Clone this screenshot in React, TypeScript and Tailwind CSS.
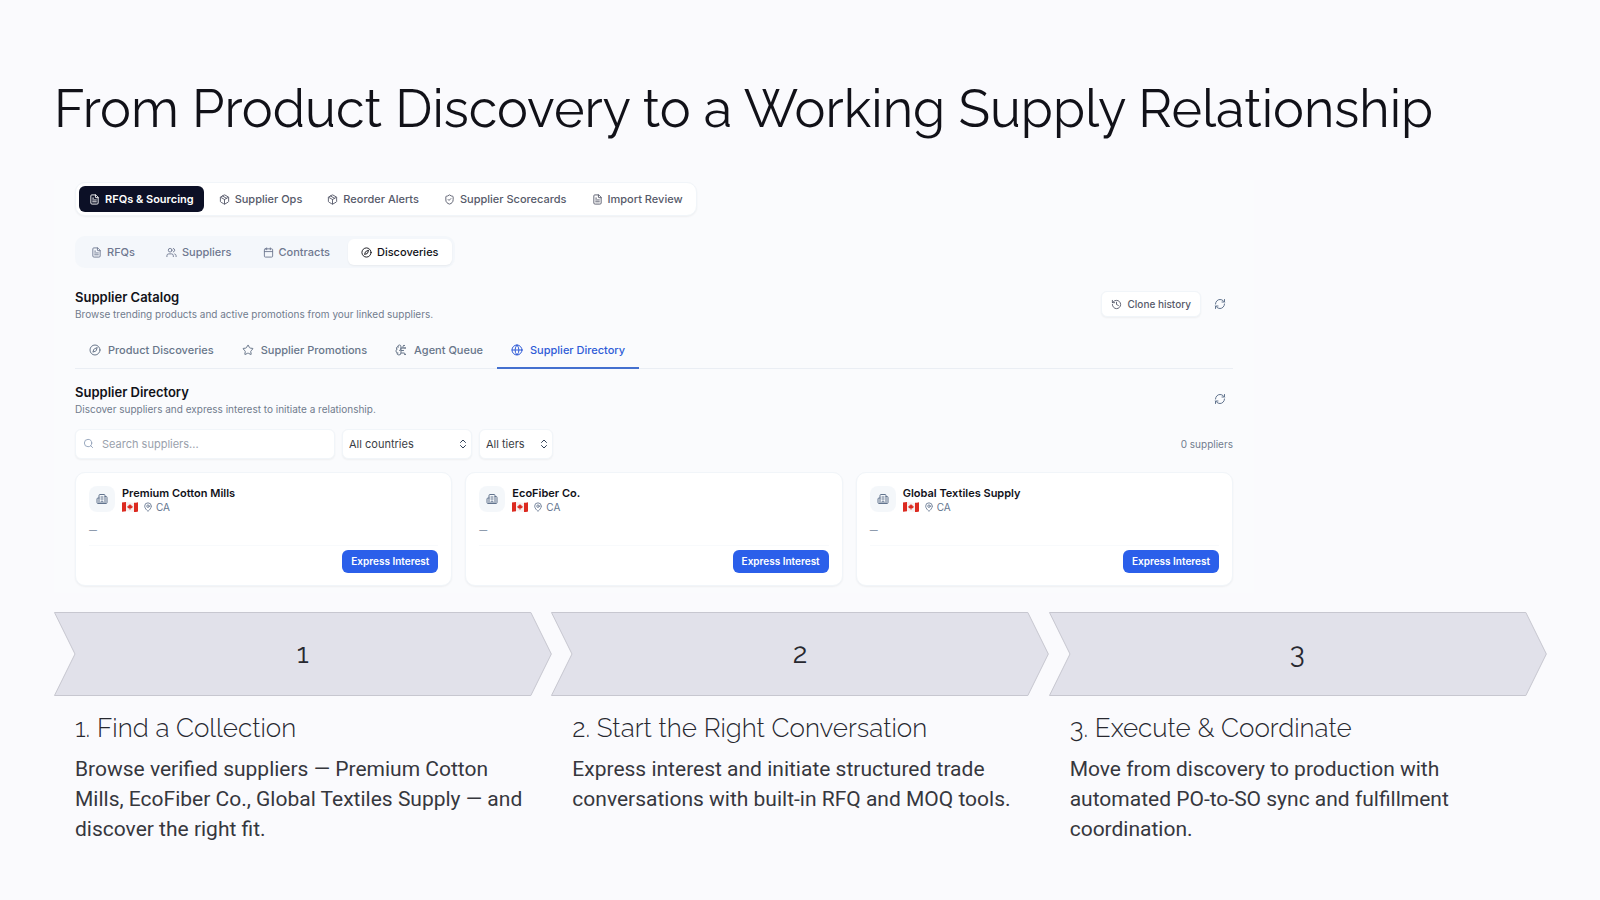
import React from 'react';
import {
  BrainCircuit,
  Building2,
  Calendar,
  ChevronsUpDown,
  Compass,
  FileText,
  Globe,
  History,
  LucideIcon,
  MapPin,
  Package,
  RefreshCw,
  Search,
  ShieldCheck,
  Star,
  Users,
} from 'lucide-react';

interface TabItem {
  label: string;
  icon: LucideIcon;
}

interface Step {
  title: string;
  text: string;
}

const mainTabs: TabItem[] = [
  { label: 'RFQs & Sourcing', icon: FileText },
  { label: 'Supplier Ops', icon: Package },
  { label: 'Reorder Alerts', icon: Package },
  { label: 'Supplier Scorecards', icon: ShieldCheck },
  { label: 'Import Review', icon: FileText },
];

const subTabs: TabItem[] = [
  { label: 'RFQs', icon: FileText },
  { label: 'Suppliers', icon: Users },
  { label: 'Contracts', icon: Calendar },
  { label: 'Discoveries', icon: Compass },
];

const catalogTabs: TabItem[] = [
  { label: 'Product Discoveries', icon: Compass },
  { label: 'Supplier Promotions', icon: Star },
  { label: 'Agent Queue', icon: BrainCircuit },
  { label: 'Supplier Directory', icon: Globe },
];

const suppliers = ['Premium Cotton Mills', 'EcoFiber Co.', 'Global Textiles Supply'];

const steps: Step[] = [
  {
    title: 'Find a Collection',
    text: 'Browse verified suppliers — Premium Cotton Mills, EcoFiber Co., Global Textiles Supply — and discover the right fit.',
  },
  {
    title: 'Start the Right Conversation',
    text: 'Express interest and initiate structured trade conversations with built-in RFQ and MOQ tools.',
  },
  {
    title: 'Execute & Coordinate',
    text: 'Move from discovery to production with automated PO-to-SO sync and fulfillment coordination.',
  },
];

const CanadaFlag: React.FC = () => (
  <svg viewBox="0 0 16 10" className="h-[10px] w-4" aria-hidden="true">
    <path d="M0 .6Q4 -.4 8 .5T16 .2V9.4Q12 10.3 8 9.4T0 9.8Z" fill="#f6f1f1" />
    <path d="M0 .6Q2 .1 4 .1V9.3Q2 9.3 0 9.8Z" fill="#dc2a20" />
    <path d="M12 .7Q14 .7 16 .2V9.4Q14 9.9 12 9.9Z" fill="#dc2a20" />
    <path d="M8 1.9l.8 1.3.8-.3-.2 1.4 1.3-.3-.3.9.4.4-1.7 1.3H6.9L5.2 5.3l.4-.4-.3-.9 1.3.3-.2-1.4.8.3zM7.7 6.6h.6v1.4h-.6z" fill="#dc2a20" />
  </svg>
);

const RefreshButton: React.FC<{ label: string }> = ({ label }) => (
  <button aria-label={label} className="flex h-[26px] w-[26px] items-center justify-center text-slate-500">
    <RefreshCw className="h-3 w-3" />
  </button>
);

const SelectBox: React.FC<{ label: string; option: string; className: string }> = ({ label, option, className }) => (
  <div className={`relative ${className}`}>
    <select
      aria-label={label}
      className="h-[30px] w-full appearance-none rounded-md border border-slate-100 bg-white pl-[6px] text-[11px] text-[#3a3d45] shadow-xs"
    >
      <option>{option}</option>
    </select>
    <ChevronsUpDown className="pointer-events-none absolute top-[9px] right-[3px] h-3 w-3 text-slate-700" />
  </div>
);

const SupplierCard: React.FC<{ name: string }> = ({ name }) => (
  <article className="rounded-[10px] border border-slate-100 bg-white px-[13px] pt-[13px] pb-3 shadow-xs">
    <div className="flex gap-[7px]">
      <div className="flex h-[26px] w-[26px] items-center justify-center rounded-lg bg-slate-100/80 text-slate-500">
        <Building2 className="h-3 w-3" />
      </div>
      <div>
        <h4 className="text-[11px] leading-[14px] font-semibold text-[#111219]">{name}</h4>
        <div className="flex items-center text-[10px] leading-[14px] text-slate-500">
          <CanadaFlag />
          <MapPin className="mr-[3px] ml-[5px] h-[10px] w-[10px] text-slate-500" />
          <span>CA</span>
        </div>
      </div>
    </div>
    <p className="mt-2 text-[8px] leading-4 text-slate-500">—</p>
    <div className="mt-[7px] flex justify-end border-t border-slate-50 pt-1">
      <button className="h-[23px] rounded-md bg-[#2b5fea] px-[9px] text-[10px] font-semibold text-white">Express Interest</button>
    </div>
  </article>
);

const SupplierPanel: React.FC = () => (
  <section className="w-full max-w-[1200px] bg-[#fafbfd] px-[21px] pt-[2px] pb-[7px] font-['Inter',sans-serif]">
    <nav className="flex w-fit gap-[5px] rounded-[10px] border border-slate-100 bg-white p-[3px] shadow-xs">
      {mainTabs.map(({ label, icon: Icon }, i) => (
        <button
          key={label}
          className={`flex h-[26px] items-center gap-[5px] rounded-md px-[10px] text-[11px] ${
            i === 0 ? 'bg-[#0c1026] font-semibold text-white' : 'font-medium text-[#565a6a]'
          }`}
        >
          <Icon className="h-[11px] w-[11px]" />
          {label}
        </button>
      ))}
    </nav>

    <nav className="mt-5 flex w-fit gap-[5px] rounded-[10px] bg-slate-100/70 p-[3px]">
      {subTabs.map(({ label, icon: Icon }, i) => (
        <button
          key={label}
          className={`flex h-[26px] items-center gap-[5px] rounded-md px-[13px] text-[11px] font-medium ${
            i === 3 ? 'bg-white text-[#111219] shadow-xs' : 'text-[#6f7890]'
          }`}
        >
          <Icon className="h-[11px] w-[11px]" />
          {label}
        </button>
      ))}
    </nav>

    <header className="mt-5 flex items-start justify-between">
      <div>
        <h2 className="text-[13px] leading-[18px] font-semibold text-[#111219]">Supplier Catalog</h2>
        <p className="text-[10px] leading-4 text-[#717c8d]">Browse trending products and active promotions from your linked suppliers.</p>
      </div>
      <div className="flex items-center gap-[6px] pt-[3px]">
        <button className="flex h-[26px] items-center gap-[6px] rounded-md border border-slate-100 bg-white px-[9px] text-[10px] font-medium text-[#565a6a] shadow-xs">
          <History className="h-[11px] w-[11px]" />
          Clone history
        </button>
        <RefreshButton label="Refresh catalog" />
      </div>
    </header>

    <nav className="mt-[11px] flex border-b border-slate-200/70">
      {catalogTabs.map(({ label, icon: Icon }, i) => (
        <button
          key={label}
          className={`-mb-px flex h-[36px] items-center gap-[7px] border-b-2 px-[14px] text-[11px] font-medium ${
            i === 3 ? 'border-[#4470cf] text-[#2f5bd7]' : 'border-transparent text-[#68768a]'
          }`}
        >
          <Icon className="h-3 w-3" />
          {label}
        </button>
      ))}
    </nav>

    <header className="mt-[14px] flex items-start justify-between">
      <div>
        <h3 className="text-[13px] leading-[18px] font-semibold text-[#111219]">Supplier Directory</h3>
        <p className="text-[10px] leading-4 text-[#717c8d]">Discover suppliers and express interest to initiate a relationship.</p>
      </div>
      <div className="pt-[3px]">
        <RefreshButton label="Refresh directory" />
      </div>
    </header>

    <div className="mt-3 flex items-center gap-[7px]">
      <label className="relative w-[260px]">
        <Search className="absolute top-[9px] left-2 h-[11px] w-[11px] text-slate-400" />
        <input
          type="text"
          aria-label="Search suppliers"
          placeholder="Search suppliers..."
          className="h-[30px] w-full rounded-md border border-slate-100 bg-white pl-[26px] text-[11px] shadow-xs placeholder:text-[#9aa1ac]"
        />
      </label>
      <SelectBox label="Country" option="All countries" className="w-[130px]" />
      <SelectBox label="Tier" option="All tiers" className="w-[74px]" />
      <span className="ml-auto text-[10px] text-[#717c8d]">0 suppliers</span>
    </div>

    <div className="mt-[13px] grid grid-cols-3 gap-[13px]">
      {suppliers.map((name) => (
        <SupplierCard key={name} name={name} />
      ))}
    </div>
  </section>
);

const StepColumn: React.FC<{ step: Step; index: number }> = ({ step, index }) => (
  <li>
    <div className="relative flex h-[84px] items-center justify-center">
      <svg className="absolute inset-0 h-full w-full overflow-visible" viewBox="0 0 498 84" preserveAspectRatio="none" aria-hidden="true">
        <path d="M.5 .5H477.5L498 42 477.5 83.5H.5L21 42Z" fill="#e1e1ea" stroke="#c7c7d0" vectorEffect="non-scaling-stroke" />
      </svg>
      <span className="relative text-[28px] font-normal">{index + 1}</span>
    </div>
    <div className="px-[21px] pt-[14px]">
      <h2 className="text-[26px] leading-[36px] font-light">
        {index + 1}. {step.title}
      </h2>
      <p className="mt-2 font-['Roboto',sans-serif] text-[21px] leading-[30px] text-[#36373d]">{step.text}</p>
    </div>
  </li>
);

const App: React.FC = () => (
  <main className="min-h-screen bg-[#fafafd] px-[54px] pt-[77px] pb-10 font-['Raleway',sans-serif] text-[#272830]">
    <h1 className="text-[52px] leading-[64px] font-normal text-[#111118]">From Product Discovery to a Working Supply Relationship</h1>
    <div className="mt-[39px]">
      <SupplierPanel />
    </div>
    <ol className="mt-[19px] grid grid-cols-3">
      {steps.map((step, i) => (
        <StepColumn key={step.title} step={step} index={i} />
      ))}
    </ol>
  </main>
);

export default App;
